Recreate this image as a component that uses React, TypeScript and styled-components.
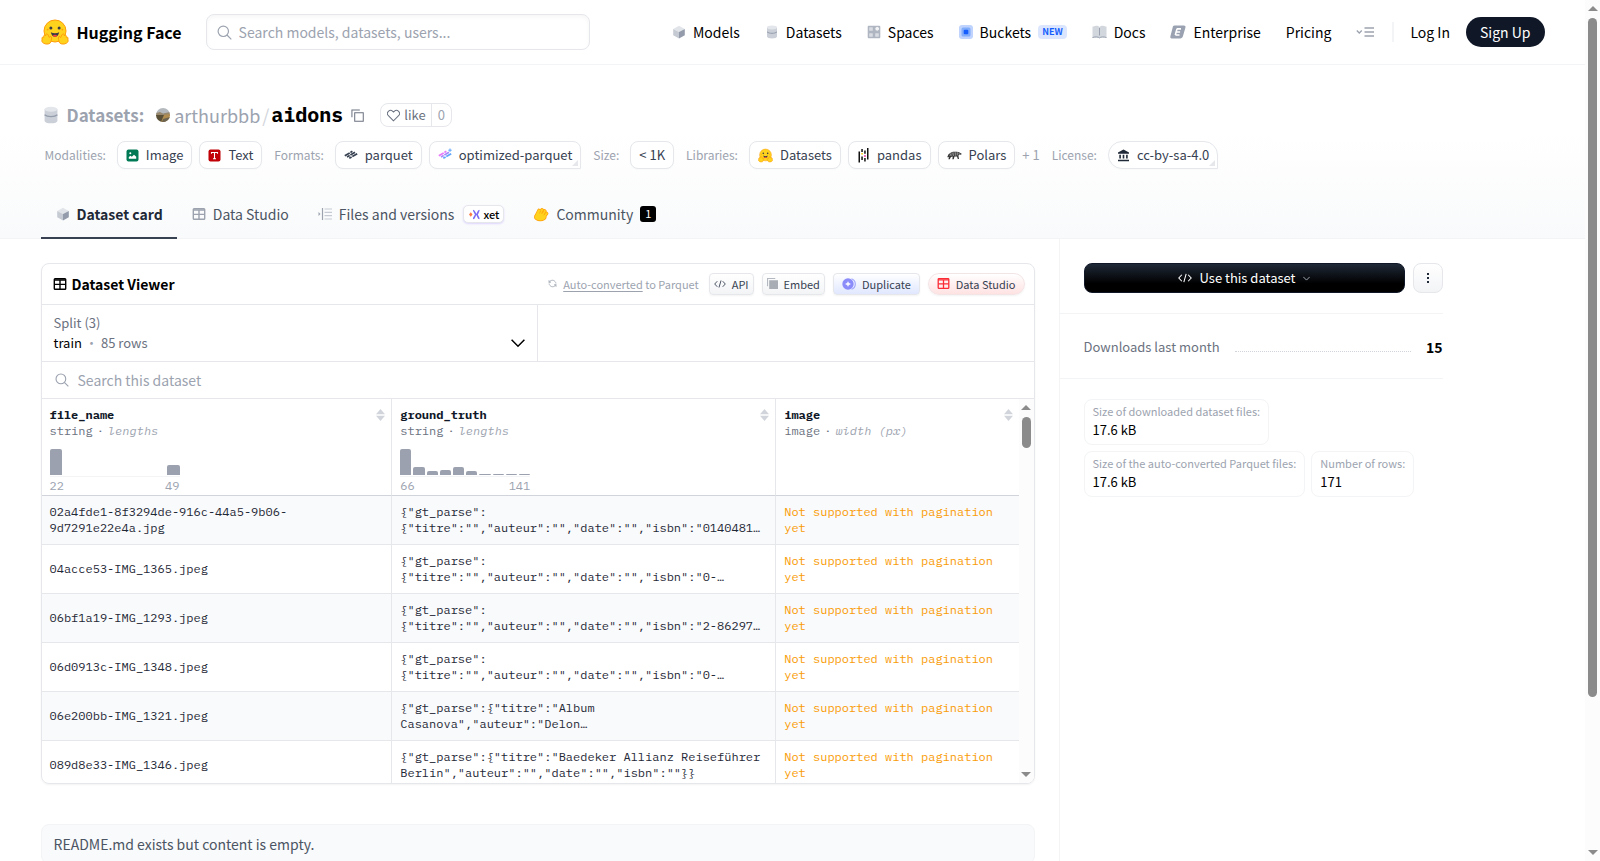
import React from 'react';
import styled, { createGlobalStyle, css } from 'styled-components';

const sans = '"Source Sans Pro", "Noto Sans CJK SC", sans-serif';
const mono = '"IBM Plex Mono", "Liberation Mono", monospace';

const c = {
  g50: '#f9fafb', g100: '#f3f4f6', g200: '#e5e7eb', g300: '#d1d5db', g400: '#9ca3af',
  g500: '#6b7280', g600: '#4b5563', g700: '#374151', g800: '#1f2937', g900: '#101828',
};

const Global = createGlobalStyle`
  *, *::before, *::after { box-sizing: border-box; }
  body { margin: 0; background: #fff; color: #000; font-family: ${sans}; font-size: 14px; line-height: 24px; }
  a { color: inherit; text-decoration: none; }
  button, input, select { font: inherit; color: inherit; margin: 0; }
  button { cursor: pointer; }
  h1, h2, p, dl, dd { margin: 0; }
  svg { display: block; flex: none; }
`;

/* ---------- page frame ---------- */
const Shell = styled.div`display: flex; height: 100vh;`;
const Page = styled.div`flex: 1; min-width: 0; overflow-y: auto; scrollbar-width: none;`;
const Rail = styled.div`
  flex: none; width: 15px; background: #fcfcfc; display: flex; flex-direction: column; align-items: center;
  padding: 6px 0;
`;
const Thumb = styled.div<{ $size: string; $w: number }>`
  width: ${p => p.$w}px; height: ${p => p.$size}; margin: 7px 0 auto; border-radius: 5px; background: #8b8b8b;
`;
const Arrow = styled.div<{ $down?: boolean }>`
  border: 5px solid transparent;
  ${p => p.$down
    ? css`border-top-color: #8b8b8b; border-bottom: 0;`
    : css`border-bottom-color: #8b8b8b; border-top: 0;`}
`;
const Container = styled.div`max-width: 1536px; margin: 0 auto; padding: 0 16px;`;

/* ---------- top bar ---------- */
const TopBar = styled.header`border-bottom: 1px solid ${c.g100};`;
const TopRow = styled(Container)`display: flex; align-items: center; height: 64px;`;
const Brand = styled.a`display: flex; align-items: center; gap: 8px; font-size: 16px; font-weight: 700; white-space: nowrap;`;
const SearchBox = styled.label`
  display: flex; align-items: center; gap: 7px; flex: 0 1 384px; height: 36px; margin-left: 24px; padding: 0 10px;
  border: 1px solid ${c.g200}; border-radius: 8px; box-shadow: inset 0 2px 4px rgba(0,0,0,.04); color: ${c.g400};
`;
const TextInput = styled.input`
  flex: 1; min-width: 0; padding: 0; border: 0; outline: 0; background: none; color: ${c.g700};
  &::placeholder { color: ${c.g400}; opacity: 1; }
`;
const Nav = styled.nav`display: flex; align-items: center; gap: 25px; margin-left: auto; white-space: nowrap;`;
const NavLink = styled.a`display: flex; align-items: center; gap: 7px;`;
const NewBadge = styled.span`
  padding: 0 4px; border-radius: 4px; background: #dbe6fe; color: #155dfc; font-size: 9px; line-height: 14px; font-weight: 700;
`;
const IconButton = styled.button`padding: 0; border: 0; background: none;`;
const Account = styled.div`
  display: flex; align-items: center; gap: 16px; margin-left: 18px; white-space: nowrap;
`;
const Divider = styled.span`width: 2px; height: 20px; background: ${c.g100};`;
const SignUp = styled.a`padding: 3px 14px; border-radius: 15px; background: ${c.g900}; color: #fff;`;

/* ---------- dataset heading ---------- */
const Hero = styled.section`border-bottom: 1px solid ${c.g100}; background: linear-gradient(to top, ${c.g50}, #fff 60%);`;
const HeroInner = styled(Container)`padding-top: 34px;`;
const Title = styled.h1`
  display: flex; align-items: center; height: 32px; font-size: 18px; font-weight: 400; color: ${c.g400};
`;
const TitleKind = styled.a`display: flex; align-items: center; gap: 7px; margin: 0 12px 0 1px; font-size: 17px; font-weight: 700;`;
const Owner = styled.a`display: flex; align-items: center; gap: 4px;`;
const Slash = styled.span`margin: 0 2px; color: ${c.g300};`;
const Name = styled.a`margin-right: 8px; font: 700 20px/24px ${mono}; color: #000;`;
const Like = styled.div`
  display: flex; margin-left: 16px; height: 24px; border: 1px solid ${c.g200}; border-radius: 8px; overflow: hidden; background: #fff;
`;
const LikeButton = styled.button`
  display: flex; align-items: center; gap: 4px; padding: 0 5px 0 6px; border: 0; background: none; font-size: 13px; line-height: 22px; color: ${c.g500};
`;
const LikeCount = styled.button`
  padding: 0 6px; border: 0; border-left: 1px solid ${c.g200}; background: none; font-size: 13px; line-height: 22px; color: ${c.g400};
`;
const TagBar = styled.div`
  display: flex; flex-wrap: wrap; align-items: center; gap: 12px; padding: 10px 4px 0;
  font-size: 13px; line-height: 18px; color: ${c.g400};
`;
const TagGroup = styled.div`display: flex; align-items: center; gap: 7px; white-space: nowrap;`;
const TagLabel = styled.span`margin-right: 4px; font-size: 12px;`;
const Tag = styled.a<{ $pill?: boolean; $menu?: boolean }>`
  position: relative; display: flex; align-items: center; gap: 7px; height: 28px; padding: 0 8px; border: 1px solid ${c.g200};
  border-radius: ${p => (p.$pill ? 14 : 8)}px; background: #fff; color: ${c.g700}; box-shadow: 0 1px 2px rgba(0,0,0,.02);
  ${p => p.$menu && css`
    border-bottom-right-radius: 0;
    &::after { content: ""; position: absolute; right: 2px; bottom: 2px; border: 3px solid ${c.g200}; border-top-color: transparent; border-left-color: transparent; }
  `}
`;
const Tabs = styled.nav`display: flex; height: 49px; margin-top: 21px; margin-bottom: -1px; color: ${c.g600}; white-space: nowrap;`;
const Tab = styled.a<{ $on?: boolean }>`
  display: flex; align-items: center; gap: 7px; padding: 1px 14px 0 15px;
  border-bottom: 2px solid ${p => (p.$on ? c.g700 : 'transparent')};
  ${p => p.$on && css`color: ${c.g800}; font-weight: 700;`}
`;
const XetBadge = styled.span`
  display: flex; align-items: center; gap: 3px; height: 18px; margin-left: 2px; padding: 0 4px 0 5px; border: 1px solid ${c.g200}; border-radius: 5px;
  background: #fff; box-shadow: 0 1px 2px #ddd6fe; color: #000; font-size: 11px; line-height: 16px; font-weight: 500;
`;
const CountBadge = styled.span`
  width: 16px; height: 16px; border-radius: 3px; background: #000; color: #fff; font-size: 11px; line-height: 15px; text-align: center;
`;

/* ---------- body columns ---------- */
const Body = styled(Container)`display: grid; grid-template-columns: minmax(0, 1018fr) minmax(0, 486fr);`;
const Main = styled.main`padding: 24px 24px 48px 0;`;
const Side = styled.aside`border-left: 1px solid ${c.g100};`;
const SideInner = styled.div`max-width: 383px;`;

/* ---------- viewer ---------- */
const Viewer = styled.section`
  border: 1px solid ${c.g200}; border-radius: 8px; overflow: hidden; box-shadow: 0 1px 2px rgba(0,0,0,.05);
`;
const ViewerHead = styled.div`
  display: flex; align-items: center; gap: 8px; height: 41px; padding: 0 9px 1px 11px; border-bottom: 1px solid ${c.g200};
`;
const ViewerTitle = styled.h2`display: flex; align-items: center; gap: 5px; margin-right: auto; font-size: 14px; font-weight: 700;`;
const Converted = styled.div`
  display: flex; align-items: center; gap: 6px; margin-right: 2px; font-size: 11px; line-height: 16px; color: ${c.g400};
  a { text-decoration: underline; text-underline-offset: 2px; }
`;
const tones = {
  plain: css`background: linear-gradient(to bottom, #fff, ${c.g100}); border-radius: 4px;`,
  indigo: css`background: linear-gradient(to bottom, #fff, #e0e7ff); border-radius: 4px;`,
  red: css`background: linear-gradient(to bottom, #fff, #ffe2e2); border-radius: 11px; border-color: #f3e4e6;`,
};
const SmallButton = styled.button<{ $tone: keyof typeof tones; $px?: number }>`
  display: flex; align-items: center; gap: 6px; height: 22px; padding: 0 ${p => p.$px ?? 4}px; border: 1px solid ${c.g200};
  font-size: 11px; line-height: 18px; color: ${c.g700}; box-shadow: 0 1px 2px rgba(0,0,0,.05);
  ${p => tones[p.$tone]}
`;
const Splits = styled.div`display: grid; grid-template-columns: 1fr 1fr; height: 57px; border-bottom: 1px solid ${c.g200};`;
const Split = styled.button`
  display: flex; align-items: flex-end; justify-content: space-between; padding: 8px 12px; border: 0; border-right: 1px solid ${c.g200};
  background: none; text-align: left; font-size: 13px; line-height: 20px; color: ${c.g500};
`;
const SplitName = styled.span`color: #000;`;
const Dot = styled.span`margin: 0 3px; color: ${c.g400};`;
const DataSearch = styled.label`
  display: flex; align-items: center; gap: 9px; height: 37px; padding: 0 13px; border-bottom: 1px solid ${c.g200}; color: ${c.g400};
`;
const Scroller = styled.div`display: flex; height: 384px;`;
const TableWrap = styled.div`flex: 1; min-width: 0; overflow: hidden;`;
const Table = styled.table`
  width: 100%; table-layout: fixed; border-collapse: separate; border-spacing: 0; font: 12px/16px ${mono}; color: ${c.g800};
`;
const Col = styled.col<{ $w: number }>`width: ${p => p.$w}%;`;
const cell = css`padding: 8px; border-bottom: 1px solid ${c.g200}; text-align: left; &:not(:last-child) { border-right: 1px solid ${c.g200}; }`;
const Th = styled.th`${cell} padding: 8px 6px 0 8px; height: 97px; border-bottom-color: ${c.g300}; font-weight: 400; vertical-align: top;`;
const Td = styled.td<{ $warn?: boolean }>`
  ${cell} height: 49px; white-space: pre-line; ${p => p.$warn && css`color: #f99c07;`}
`;
const Tr = styled.tr`&:nth-child(odd) { background: ${c.g50}; }`;
const ThTop = styled.div`display: flex; justify-content: space-between;`;
const ColName = styled.div`font-weight: 700; color: ${c.g900};`;
const ColType = styled.div`white-space: nowrap; color: ${c.g500}; em { color: ${c.g400}; }`;
const TypeDot = styled.span`margin: 0 4px;`;
const Bars = styled.div`display: flex; align-items: flex-end; gap: 2px; width: 130px; height: 28px; margin-top: 10px; padding-bottom: 1px; border-bottom: 1px solid ${c.g100};`;
const Bar = styled.span`flex: 1; border-radius: 2px 2px 0 0; background: #9ba1ae;`;
const Range = styled.div`display: flex; justify-content: space-between; width: 130px; line-height: 17px; color: ${c.g400};`;
const Readme = styled.div`
  margin-top: 40px; padding: 7px 12px; border: 1px solid ${c.g100}; border-radius: 8px; background: ${c.g50}; color: ${c.g600};
`;

/* ---------- sidebar ---------- */
const Actions = styled.div`display: flex; gap: 8px; padding: 24px 0 20px 24px;`;
const UseButton = styled.button`
  display: flex; flex: 1; align-items: center; justify-content: center; gap: 7px; height: 30px; padding: 0; border: 1px solid ${c.g900};
  border-radius: 8px; background: linear-gradient(to bottom, ${c.g800}, #000 70%); color: #fff; font-size: 13px; line-height: 20px;
`;
const MoreButton = styled.button`
  display: grid; place-items: center; width: 30px; height: 30px; padding: 0; border: 1px solid ${c.g200}; border-radius: 8px;
  background: linear-gradient(to bottom, #fff, ${c.g100});
`;
const Downloads = styled.dl`
  display: flex; align-items: center; gap: 15px; height: 66px; padding: 2px 0 0 24px; border: solid ${c.g100}; border-width: 1px 0;
  font-size: 13px; color: ${c.g500};
`;
const Leader = styled.span`flex: 1; height: 10px; border-bottom: 1px dotted ${c.g300};`;
const DownloadCount = styled.dd`font-size: 14px; font-weight: 700; color: #000;`;
const Facts = styled.div`display: flex; flex-wrap: wrap; gap: 6px; padding: 20px 0 24px 24px;`;
const Fact = styled.a`
  padding: 3px 8px 5px; border: 1px solid ${c.g100}; border-radius: 8px; font-size: 13px; line-height: 19px; white-space: nowrap;
  small { display: block; font-size: 11px; line-height: 17px; color: ${c.g400}; }
`;

/* ---------- icons ---------- */
const Face = ({ w = 28 }: { w?: number }) => (
  <svg width={w} height={w} viewBox="0 0 28 28">
    <circle cx="14" cy="13" r="11" fill="#ffd21e" stroke="#ff9d0b" strokeWidth="1" />
    <circle cx="9.9" cy="10" r="1.5" fill="#3a3b45" /><circle cx="18.1" cy="10" r="1.5" fill="#3a3b45" />
    <circle cx="6.6" cy="11.6" r=".9" fill="#ff9d0b" /><circle cx="21.4" cy="11.6" r=".9" fill="#ff9d0b" />
    <path d="M9.8 14.2c.7 3 2.200 4.500 4.200 4.500s3.500-1.500 4.200-4.500c-2.600 1.300-5.800 1.300-8.400 0z" fill="#3a3b45" />
    <path d="M11.700 17.700c1.300-1.200 3.300-1.200 4.600 0-1.200 1.300-3.400 1.300-4.600 0z" fill="#f94040" />
    <path d="M1.200 21c-1-1.500.8-2.500 1.700-1.700-.9-1.900 1-3 1.800-1.500-.4-2 1.600-2.600 2.300-1l1.400 2.700c.5-1.600 2.500-1.400 2.200.6-.3 1.800-.3 3.600-1.200 4.700-1.500 1.800-5.200 1.500-7 .3-1.300-.9-2-1.900-1.200-4.100z" fill="#ffd21e" stroke="#ff9d0b" strokeWidth="1" />
    <path d="M26.800 21c1-1.500-.8-2.500-1.700-1.700.9-1.900-1-3-1.800-1.500.4-2-1.600-2.600-2.300-1l-1.400 2.700c-.5-1.600-2.500-1.400-2.200.6.3 1.800.3 3.600 1.200 4.700 1.500 1.800 5.200 1.500 7 .3 1.300-.9 2-1.900 1.200-4.100z" fill="#ffd21e" stroke="#ff9d0b" strokeWidth="1" />
  </svg>
);
const Magnifier = ({ w = 15 }: { w?: number }) => (
  <svg width={w} height={w} viewBox="0 0 15 15" fill="none" stroke={c.g400} strokeWidth="1.200"><circle cx="6.300" cy="6.300" r="5.200" /><path d="M10 10l4.300 4.300" /></svg>
);
const Cube = () => (
  <svg width="14" height="14" viewBox="0 0 14 14"><path d="M7 .8L12.800 4 7 7 1.200 4z" fill="#e1e4e9" /><path d="M1.200 4L7 7v6.500L1.200 10.300z" fill="#c6cbd3" /><path d="M12.800 4L7 7v6.500l5.800-3.200z" fill="#949cab" /></svg>
);
const Cylinder = ({ w = 14 }: { w?: number }) => (
  <svg width={w} height={w} viewBox="0 0 14 14"><path d="M2 2.500v9C2 12.800 4.200 13.500 7 13.500s5-.7 5-2v-9z" fill="#cbd0d8" /><ellipse cx="7" cy="2.500" rx="5" ry="1.900" fill="#e3e6ea" /><path d="M2 6.800c1.200 1.100 3 1.500 5 1.500s3.800-.4 5-1.500" fill="none" stroke="#959dac" strokeWidth="1" /></svg>
);
const SpacesIcon = () => (
  <svg width="14" height="14" viewBox="0 0 14 14"><rect x=".7" y=".7" width="12.600" height="12.600" rx="1" fill="#b0b6c1" /><g fill="#d9dce2"><rect x="2.200" y="2.200" width="3.600" height="3.600" rx=".5" /><rect x="2.200" y="8.200" width="3.600" height="3.600" rx=".5" /><rect x="8.200" y="8.200" width="3.600" height="3.600" rx=".5" /><circle cx="10.200" cy="3.800" r="2.400" fill="#f3f4f6" stroke="#b0b6c1" /></g></svg>
);
const BucketIcon = () => (
  <svg width="14" height="14" viewBox="0 0 14 14"><rect width="14" height="14" rx="3" fill="#bfd3fd" /><rect x="2.500" y="2.500" width="9" height="9" rx="1.500" fill="#80acfb" /><rect x="4.700" y="4.700" width="4.600" height="4.600" rx="1" fill="#155dfc" /></svg>
);
const DocsIcon = () => (
  <svg width="15" height="14" viewBox="0 0 15 14"><path d="M.5 11.500v-10h1.200C3 .4 6.200.4 7.500 2 8.800.4 12 .4 13.300 1.500h1.200v11.300l-5-.3-2 .6-2-.6-5 .3z" fill="#d2d6dd" /><path d="M7.500 3v7.500M.5 12.500c3-.8 5.500-.8 7 .4 1.500-1.200 4-1.200 7-.4" fill="none" stroke="#9aa2b0" /></svg>
);
const EnterpriseIcon = () => (
  <svg width="16" height="14" viewBox="0 0 16 14"><path d="M4.500.5h9.300c1.400 0 2 .9 1.600 2.200l-2.500 8.600c-.4 1.300-1.300 2.200-2.800 2.200H1.800C.5 13.500 0 12.600.4 11.300L2.600 2.700C2.900 1.300 3.300.5 4.500.5z" fill="#9aa2b1" /><path d="M6.800 3.900h4.200M6.200 7h3.900M5.300 10h4.200M7 3.900L5.300 10" fill="none" stroke="#fff" strokeWidth="1.600" /></svg>
);
const MoreMenu = () => (
  <svg width="18" height="12" viewBox="0 0 18 12" fill="none" stroke={c.g400} strokeWidth="1.300"><path d="M.8 4.500L3.300 7l2.500-2.500M8.500 2H18M8.500 6H18M8.500 10H18" /></svg>
);
const Avatar = () => (
  <svg width="14" height="14" viewBox="0 0 14 14"><defs><clipPath id="av"><circle cx="7" cy="7" r="7" /></clipPath></defs><g clipPath="url(#av)"><path fill="#b4b9be" d="M0 0h14v6H0z" /><path fill="#97876c" d="M0 5l4-1 3 1.500L14 4v4H0z" /><path fill="#5a5038" d="M0 7h9v7H0z" /><path fill="#b08d4f" d="M8 7l6-1v8H5z" /><path fill="#6b6350" d="M7 11l7-2v5H6z" /></g></svg>
);
const CopyIcon = () => (
  <svg width="13" height="13" viewBox="0 0 14 14" fill="none" stroke={c.g500} strokeWidth="1.100"><path d="M4 4h9.200v9.200H4zM1 9V1H9.500" /></svg>
);
const Heart = () => (
  <svg width="13" height="13" viewBox="0 0 14 14" fill="none" stroke={c.g500} strokeWidth="1.100"><path d="M7 12.800L1.500 7.200A3.300 3.300 0 0 1 6.200 2.500L7 3.300l.8-.8a3.300 3.300 0 0 1 4.700 4.700z" /></svg>
);
const ImageIcon = () => (
  <svg width="13" height="13" viewBox="0 0 13 13"><rect x=".5" y=".5" width="12" height="12" rx="2" fill="#007a55" /><path d="M2.800 9.800V8l1.700-1.200 1.300 1L8 5.800l2.200 2v2z" fill="#fff" /><circle cx="4.300" cy="4.200" r="1" fill="#fff" /></svg>
);
const TextIcon = () => (
  <svg width="13" height="13" viewBox="0 0 13 13"><rect x=".5" y=".5" width="12" height="12" rx="2" fill="#c10007" /><path d="M3.500 4.800V3.500h6v1.300M6.500 3.500v6M5 9.700h3" fill="none" stroke="#fff" strokeWidth="1.100" /></svg>
);
const Parquet = ({ color }: { color?: boolean }) => {
  const [a, b, d] = color ? ['#e879f9', '#a78bfa', '#60a5fa'] : [c.g700, c.g700, c.g700];
  return (
    <svg width="14" height="14" viewBox="0 0 14 14" fill="none" strokeWidth="1.700">
      <path d="M.8 7.800l4.900-2.900M6.400 4.500l2-1.200" stroke={a} />
      <path d="M3 9l2.700-1.600M6.400 7L11 4.300" stroke={b} />
      <path d="M5.300 10.300l2.300-1.300M8.300 8.600l4.900-2.900" stroke={d} />
      {color && <path d="M12 .5v3.400M10.300 2.200h3.400" stroke="#60a5fa" strokeWidth="1" />}
    </svg>
  );
};
const Pandas = () => (
  <svg width="13" height="15" viewBox="0 0 12 15"><g fill="#111"><path d="M1 3.500h1.500v11H1zM9.500 0H11v11.500H9.500zM3.800 1h1.500v3H3.800zM3.800 8.500h1.500v3.500H3.800zM6.700 2.500h1.500v3.200H6.700zM6.700 10h1.500v3.500H6.700z" /></g><path fill="#ffca00" d="M3.800 5h1.500v1.500H3.800z" /><path fill="#e70488" d="M6.700 7.200h1.500v1.600H6.700z" /></svg>
);
const Polars = () => (
  <svg width="15" height="9" viewBox="0 0 15 9"><path d="M.3 6L1.500 3.300 4 1.500 6 .8h4l2 .4 2.700 1.600-.6.900-1.800-.1-.9 1.200.6 3.200h-1.200L10 5.400H7.500l-.8 2.900H5.400L5.700 5.500 3.900 6 2.800 8.300H1.400L2.200 5.500l-1 .9z" fill="#333" /><path d="M3.600 2.500L3 5M5.300 1.500L4.800 4.800M7 1.200L6.600 5M8.700 1.200v3.600M10.300 1.200v3.200M12 2v1.400" stroke="#fff" strokeWidth=".5" /></svg>
);
const License = () => (
  <svg width="13" height="13" viewBox="0 0 13 13" fill="#1f2937"><path d="M6.500.5L12 3.500v1.300H1V3.500zM2.300 5.800h1.600v3.700H2.300zM5.700 5.800h1.600v3.700H5.700zM9.100 5.800h1.600v3.700H9.100zM1 10.700h11v1.500H1z" /></svg>
);
const GridIcon = ({ color = '#000', w = 14 }: { color?: string; w?: number }) => (
  <svg width={w} height={w} viewBox="0 0 14 14" fill="none" stroke={color} strokeWidth="1.400"><rect x="1.300" y="1.700" width="11.400" height="10.600" rx=".8" /><path d="M1.300 3h11.400M1.300 7.400h11.400M7 3v9" /></svg>
);
const FilesIcon = () => (
  <svg width="14" height="14" viewBox="0 0 14 14" fill="none" strokeWidth="1.200"><path d="M4.500 1v12" stroke="#9ca3af" /><path d="M6.500 2H14M6.500 5.300H14M6.500 8.700H14M6.500 12H14" stroke="#c6cbd3" /><path d="M.5 5l2 2-2 2z" fill="#9ca3af" /></svg>
);
const Xet = () => (
  <svg width="11" height="11" viewBox="0 0 11 11" fill="none" strokeWidth="1.700"><path d="M1.800 3.300L0 5.500l1.800 2.200L3.500 5.500z" fill="#ff7a45" /><path d="M4 1.500c2 0 1.500 4 3.400 4S8.500 9.500 10.500 9.500M10.500 1.500c-2 0-1.100 4-3.100 4S6 9.500 4 9.500" stroke="#7c6cf5" /></svg>
);
const Clap = () => (
  <svg width="16" height="15" viewBox="0 0 16 15" strokeLinecap="round">
    <path d="M3.500 8.500L6 3.500M6 8.500l3-5.700M8.500 9l3.200-5M10.500 10l3-3.500" stroke="#ff9d0b" strokeWidth="3.600" />
    <ellipse cx="7.300" cy="10" rx="6.300" ry="4.300" fill="#ff9d0b" />
    <ellipse cx="7.300" cy="10" rx="5.600" ry="3.600" fill="#ffd21e" />
    <path d="M3.500 8.500L6 3.500M6 8.500l3-5.700M8.500 9l3.200-5M10.500 10l3-3.500" stroke="#ffd21e" strokeWidth="2.300" />
    <path d="M6.700 6l1-2M9.200 6.300l1.200-1.900M11 8l1.200-1.500" stroke="#ff9d0b" strokeWidth=".7" />
  </svg>
);
const Refresh = () => (
  <svg width="9" height="9" viewBox="0 0 9 9" fill="none" stroke={c.g400} strokeWidth=".8"><path d="M1 3.800V1.200M1 3.200h2M1.300 3C2.500 1 5.500.6 7 2.500c.6.700.9 1.300.9 2M8 5.200v2.600M8 5.800H6M7.700 6C6.500 8 3.500 8.400 2 6.500c-.6-.7-.9-1.300-.9-2" /></svg>
);
const Code = ({ w = 12 }: { w?: number }) => (
  <svg width={w} height={w} viewBox="0 0 12 12" fill="none" stroke="currentColor" strokeWidth=".9"><path d="M3.300 3.200L.7 6l2.600 2.800M8.700 3.200L11.300 6 8.700 8.800M7 2.500L5 9.500" /></svg>
);
const Embed = () => (
  <svg width="11" height="11" viewBox="0 0 10 10"><path d="M.5 7.500v-7h7" fill="none" stroke="#b4b8c0" /><path d="M2 2h8v8H2z" fill="#a7acb5" /></svg>
);
const Duplicate = () => (
  <svg width="14" height="12" viewBox="0 0 14 12"><circle cx="6" cy="6" r="5.700" fill="#8b8bfa" /><path d="M9.500.7a5.600 5.600 0 0 1 0 10.600" fill="none" stroke="#a3a8fb" strokeWidth="1.200" /><path d="M6 3.700v4.600M3.700 6h4.600" stroke="#fff" strokeWidth="1.300" /></svg>
);
const Chevron = ({ w = 14, k = 1.5 }: { w?: number; k?: number }) => (
  <svg width={w} height={w} viewBox="0 0 14 14" fill="none" stroke="currentColor" strokeWidth={k}><path d="M.6 3.700L7 10.200l6.400-6.500" /></svg>
);
const ChevronBlack = styled.span`color: #000; padding: 3px 0;`;
const ChevronFaint = styled.span`color: ${c.g400};`;
const Kebab = () => (<svg width="4" height="12" viewBox="0 0 4 12" fill={c.g800}><rect x="1" y="1" width="2" height="2" /><rect x="1" y="5" width="2" height="2" /><rect x="1" y="9" width="2" height="2" /></svg>);
const Sorter = () => (<svg width="9" height="16" viewBox="0 0 9 16" fill={c.g300}><path d="M4.500 2L9 7.300H0zM4.500 14L0 8.700h9z" /></svg>);

/* ---------- data ---------- */
const columns = [
  { name: 'file_name', type: 'string', stat: 'lengths', bars: [26, 0, 0, 0, 0, 0, 0, 0, 10], from: '22', to: '49', width: 35.9 },
  { name: 'ground_truth', type: 'string', stat: 'lengths', bars: [26, 8, 4, 5, 8, 4, 1, 1, 1, 1], from: '66', to: '141', width: 39.3 },
  { name: 'image', type: 'image', stat: 'width (px)', bars: null, from: '', to: '', width: 24.8 },
];
const rows = [
  ['02a4fde1-8f3294de-916c-44a5-9b06-\n9d7291e22e4a.jpg', '{"gt_parse":\n{"titre":"","auteur":"","date":"","isbn":"0140481…'],
  ['04acce53-IMG_1365.jpeg', '{"gt_parse":\n{"titre":"","auteur":"","date":"","isbn":"0-…'],
  ['06bf1a19-IMG_1293.jpeg', '{"gt_parse":\n{"titre":"","auteur":"","date":"","isbn":"2-86297…'],
  ['06d0913c-IMG_1348.jpeg', '{"gt_parse":\n{"titre":"","auteur":"","date":"","isbn":"0-…'],
  ['06e200bb-IMG_1321.jpeg', '{"gt_parse":{"titre":"Album\nCasanova","auteur":"Delon…'],
  ['089d8e33-IMG_1346.jpeg', '{"gt_parse":{"titre":"Baedeker Allianz Reiseführer\nBerlin","auteur":"","date":"","isbn":""}}'],
];

export default function App() {
  return (
    <Shell>
      <Global />
      <Page>
        <TopBar>
          <TopRow>
            <Brand href="#"><Face />Hugging Face</Brand>
            <SearchBox><Magnifier /><TextInput aria-label="Search" placeholder="Search models, datasets, users..." /></SearchBox>
            <Nav>
              <NavLink href="#"><Cube />Models</NavLink>
              <NavLink href="#"><Cylinder />Datasets</NavLink>
              <NavLink href="#"><SpacesIcon />Spaces</NavLink>
              <NavLink href="#"><BucketIcon />Buckets<NewBadge>NEW</NewBadge></NavLink>
              <NavLink href="#"><DocsIcon />Docs</NavLink>
              <NavLink href="#"><EnterpriseIcon />Enterprise</NavLink>
              <NavLink href="#">Pricing</NavLink>
              <IconButton aria-label="More links"><MoreMenu /></IconButton>
            </Nav>
            <Account><Divider /><a href="#">Log In</a><SignUp href="#">Sign Up</SignUp></Account>
          </TopRow>
        </TopBar>

        <Hero>
          <HeroInner>
            <Title>
              <TitleKind href="#"><Cylinder w={18} />Datasets:</TitleKind>
              <Owner href="#"><Avatar />arthurbbb</Owner><Slash>/</Slash><Name href="#">aidons</Name>
              <IconButton aria-label="Copy name"><CopyIcon /></IconButton>
              <Like><LikeButton><Heart />like</LikeButton><LikeCount>0</LikeCount></Like>
            </Title>
            <TagBar>
              <TagGroup><TagLabel>Modalities:</TagLabel><Tag href="#"><ImageIcon />Image</Tag><Tag href="#"><TextIcon />Text</Tag></TagGroup>
              <TagGroup><TagLabel>Formats:</TagLabel><Tag href="#"><Parquet />parquet</Tag><Tag href="#" $menu><Parquet color />optimized-parquet</Tag></TagGroup>
              <TagGroup><TagLabel>Size:</TagLabel><Tag href="#">&lt; 1K</Tag></TagGroup>
              <TagGroup><TagLabel>Libraries:</TagLabel><Tag href="#"><Face w={15} />Datasets</Tag><Tag href="#"><Pandas />pandas</Tag><Tag href="#"><Polars />Polars</Tag><a href="#">+ 1</a></TagGroup>
              <TagGroup><TagLabel>License:</TagLabel><Tag href="#" $pill $menu><License />cc-by-sa-4.0</Tag></TagGroup>
            </TagBar>
            <Tabs>
              <Tab href="#" $on><Cube />Dataset card</Tab>
              <Tab href="#"><GridIcon color={c.g400} />Data Studio</Tab>
              <Tab href="#"><FilesIcon />Files and versions<XetBadge><Xet />xet</XetBadge></Tab>
              <Tab href="#"><Clap />Community<CountBadge>1</CountBadge></Tab>
            </Tabs>
          </HeroInner>
        </Hero>

        <Body>
          <Main>
            <Viewer>
              <ViewerHead>
                <ViewerTitle><GridIcon />Dataset Viewer</ViewerTitle>
                <Converted><Refresh /><span><a href="#">Auto-converted</a> to Parquet</span></Converted>
                <SmallButton $tone="plain"><Code />API</SmallButton>
                <SmallButton $tone="plain"><Embed />Embed</SmallButton>
                <SmallButton $tone="indigo" $px={8}><Duplicate />Duplicate</SmallButton>
                <SmallButton $tone="red" $px={8}><GridIcon color="#fb2c36" w={13} />Data Studio</SmallButton>
              </ViewerHead>
              <Splits>
                <Split>
                  <span>Split (3)<br /><SplitName>train</SplitName><Dot>·</Dot>85 rows</span>
                  <ChevronBlack><Chevron /></ChevronBlack>
                </Split>
              </Splits>
              <DataSearch><Magnifier w={14} /><TextInput aria-label="Search this dataset" placeholder="Search this dataset" /></DataSearch>
              <Scroller>
                <TableWrap>
                  <Table>
                    <colgroup>{columns.map(k => <Col key={k.name} $w={k.width} />)}</colgroup>
                    <thead>
                      <tr>
                        {columns.map(k => (
                          <Th key={k.name} scope="col">
                            <ThTop>
                              <div><ColName>{k.name}</ColName><ColType>{k.type}<TypeDot>·</TypeDot><em>{k.stat}</em></ColType></div>
                              <Sorter />
                            </ThTop>
                            {k.bars && <><Bars>{k.bars.map((h, i) => <Bar key={i} style={{ height: h }} />)}</Bars>
                              <Range><span>{k.from}</span><span>{k.to}</span></Range></>}
                          </Th>
                        ))}
                      </tr>
                    </thead>
                    <tbody>
                      {rows.map(([file, truth]) => (
                        <Tr key={file}><Td>{file}</Td><Td>{truth}</Td><Td $warn>Not supported with pagination yet</Td></Tr>
                      ))}
                    </tbody>
                  </Table>
                </TableWrap>
                <Rail aria-hidden><Arrow /><Thumb $size="31px" $w={9} /><Arrow $down /></Rail>
              </Scroller>
            </Viewer>
            <Readme>README.md exists but content is empty.</Readme>
          </Main>
          <Side>
            <SideInner>
              <Actions>
                <UseButton><Code w={14} />Use this dataset<ChevronFaint><Chevron w={7} k={2} /></ChevronFaint></UseButton>
                <MoreButton aria-label="More actions"><Kebab /></MoreButton>
              </Actions>
              <Downloads><dt>Downloads last month</dt><Leader /><DownloadCount>15</DownloadCount></Downloads>
              <Facts>
                <Fact href="#"><small>Size of downloaded dataset files:</small>17.6 kB</Fact>
                <Fact href="#"><small>Size of the auto-converted Parquet files:</small>17.6 kB</Fact>
                <Fact href="#"><small>Number of rows:</small>171</Fact>
              </Facts>
            </SideInner>
          </Side>
        </Body>
      </Page>
      <Rail aria-hidden><Arrow /><Thumb $size="80%" $w={9} /><Arrow $down /></Rail>
    </Shell>
  );
}
